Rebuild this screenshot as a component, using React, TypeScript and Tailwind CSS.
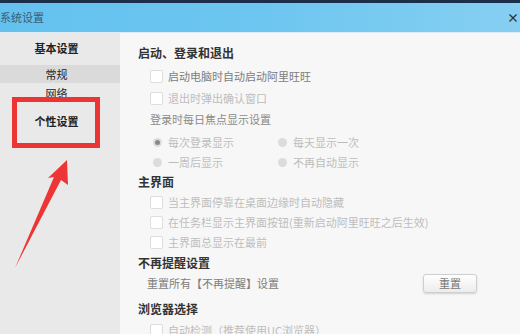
import React from "react";

const FONT = { fontFamily: '"Noto Sans CJK SC", "Noto Sans", sans-serif' };

function Check({ label, dim }: { label: string; dim?: boolean }) {
	return (
		<div className="flex h-[20px] items-center pl-[12px]">
			<span className="h-[13px] w-[13px] rounded-[2px] border border-[#dedede] bg-white" />
			<span className={`ml-[5px] text-[11px] leading-none ${dim ? "text-[#bdbdbd]" : "text-[#7d7d7d]"}`}>{label}</span>
		</div>
	);
}

function Radio({ label, on }: { label: string; on?: boolean }) {
	return (
		<div className="flex items-center">
			<span className="ml-[15px] flex h-[9px] w-[9px] items-center justify-center rounded-full bg-[#dcdcdc]">
				{on && <span className="h-[5px] w-[5px] rounded-full bg-[#8a8a8a]" />}
			</span>
			<span className="ml-[6px] text-[11px] leading-none text-[#bdbdbd]">{label}</span>
		</div>
	);
}

function Heading({ text, className = "" }: { text: string; className?: string }) {
	return <div className={`flex h-[20px] items-center text-[12px] font-bold leading-none text-[#333] ${className}`}>{text}</div>;
}

export default function App() {
	return (
		<div className="relative flex h-[334px] w-[520px] flex-col overflow-hidden bg-[#f7f7f7]" style={FONT}>
			{/* title bar */}
			<div className="flex h-[32px] shrink-0 items-center justify-between border-t-[3px] border-[#1b2f4a] bg-gradient-to-r from-[#64c1ee] via-[#6cc6f0] to-[#86cff2] pr-[1px]">
				<span className="text-[11px] leading-none text-[#3a5d74]">系统设置</span>
				<span className="text-[12px] font-bold leading-none text-[#333]">×</span>
			</div>
			<div className="h-[1px] shrink-0 bg-[#dfeef6]" />

			<div className="flex flex-1">
				{/* sidebar */}
				<div className="w-[120px] shrink-0 bg-[#e9e9e9] pt-[5px] text-[#222]">
					<div className="flex h-[20px] w-[113px] items-center justify-center text-[11px] font-bold leading-none">基本设置</div>
					<div className="mt-[7px] flex h-[18px] items-center bg-[#dadada]">
						<span className="w-[113px] text-center text-[11px] leading-none">常规</span>
					</div>
					<div className="flex h-[20px] w-[113px] items-center justify-center text-[11px] leading-none">网络</div>
					<div className="mt-[8px] flex h-[20px] w-[113px] items-center justify-center text-[11px] font-bold leading-none">个性设置</div>
				</div>

				{/* content */}
				<div className="flex-1 pl-[18px] pt-[10px]">
					<Heading text="启动、登录和退出" />
					<div className="mt-[3px]">
						<Check label="启动电脑时自动启动阿里旺旺" />
					</div>
					<div className="mt-[2px]">
						<Check label="退出时弹出确认窗口" dim />
					</div>
					<div className="mt-[1px] flex h-[20px] items-center pl-[12px] text-[11px] leading-none text-[#8a8a8a]">登录时每日焦点显示设置</div>
					<div className="mt-[3px] grid h-[20px] grid-cols-[125px_1fr] items-center">
						<Radio label="每次登录显示" on />
						<Radio label="每天显示一次" />
					</div>
					<div className="grid h-[20px] grid-cols-[125px_1fr] items-center">
						<Radio label="一周后显示" />
						<Radio label="不再自动显示" />
					</div>
					<Heading text="主界面" />
					<Check label="当主界面停靠在桌面边缘时自动隐藏" dim />
					<Check label="在任务栏显示主界面按钮(重新启动阿里旺旺之后生效)" dim />
					<Check label="主界面总显示在最前" dim />
					<Heading text="不再提醒设置" className="mt-[1px]" />
					<div className="flex h-[20px] items-center justify-between pr-[43px]">
						<span className="pl-[9px] text-[11px] leading-none text-[#7d7d7d]">重置所有【不再提醒】设置</span>
						<button className="h-[19px] w-[54px] rounded-[3px] border border-[#cfcfcf] bg-gradient-to-b from-white to-[#ececec] text-[11px] leading-none text-[#777] shadow-[0_1px_2px_rgba(0,0,0,0.15)]">
							重置
						</button>
					</div>
					<Heading text="浏览器选择" className="mt-[6px]" />
					<div className="mt-[1px]">
						<Check label="自动检测（推荐使用UC浏览器）" dim />
					</div>
				</div>
			</div>

			{/* annotation overlay */}
			<div className="absolute left-[12px] top-[97px] h-[51px] w-[88px] border-[5px] border-[#ec3434]" />
			<svg className="absolute left-0 top-0" width="520" height="334" viewBox="0 0 520 334">
				<polygon points="67,160 68,185 61,180 15,268 54,177 48,178" fill="#ee3535" />
			</svg>
		</div>
	);
}
